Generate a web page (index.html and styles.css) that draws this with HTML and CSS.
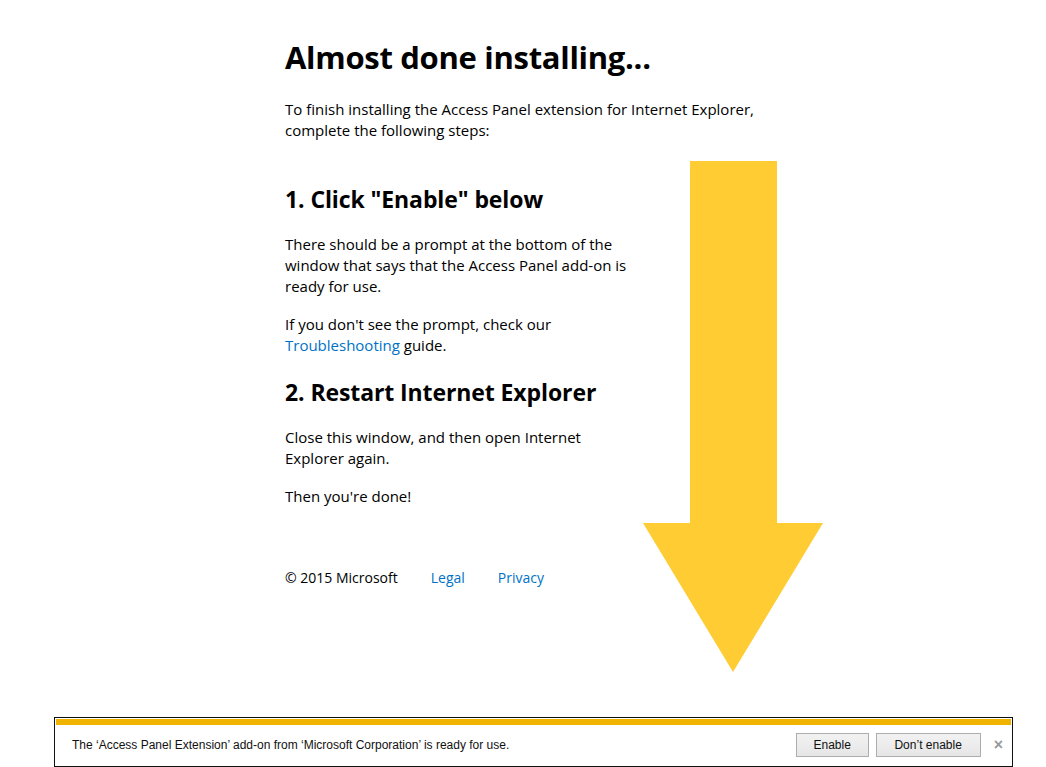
FILE: index.html
```html
<!DOCTYPE html>
<html lang="en">
<head>
<meta charset="utf-8">
<title>Almost done installing...</title>
<link rel="stylesheet" href="styles.css">
</head>
<body>
<div class="page">
  <main class="content">
    <h1 class="title">Almost done installing...</h1>
    <p class="intro">To finish installing the Access Panel extension for Internet Explorer, complete the following steps:</p>
    <div class="row">
      <div class="steps">
        <h2 class="step-title">1. Click "Enable" below</h2>
        <p class="text">There should be a prompt at the bottom of the window that says that the Access Panel add-on is ready for use.</p>
        <p class="text">If you don't see the prompt, check our <a class="link" href="#">Troubleshooting</a> guide.</p>
        <h2 class="step-title">2. Restart Internet Explorer</h2>
        <p class="text">Close this window, and then open Internet Explorer again.</p>
        <p class="text">Then you're done!</p>
        <footer class="footer">
          <span>© 2015 Microsoft</span>
          <a class="link" href="#">Legal</a>
          <a class="link" href="#">Privacy</a>
        </footer>
      </div>
      <svg class="arrow" width="180" height="511" viewBox="0 0 180 511" aria-hidden="true">
        <polygon points="47,0 134,0 134,362 180,362 90,511 0,362 47,362" fill="#ffcc33"/>
      </svg>
    </div>
  </main>
  <div class="notify">
    <div class="notify-strip"></div>
    <div class="notify-row">
      <span class="notify-text">The ‘Access Panel Extension’ add-on from ‘Microsoft Corporation’ is ready for use.</span>
      <button class="btn btn-enable" type="button">Enable</button>
      <button class="btn btn-dont" type="button">Don’t enable</button>
      <span class="notify-close">×</span>
    </div>
  </div>
</div>
</body>
</html>
```
FILE: styles.css
```css
html, body {
  margin: 0;
  padding: 0;
  background: #fff;
}
body {
  font-family: "Open Sans", "Noto Sans", sans-serif;
  color: #000;
}
.page {
  display: flex;
  flex-direction: column;
  min-height: 767px;
}
.content {
  padding-left: 285px;
}
.title {
  margin: 37px 0 0;
  font-size: 31px;
  line-height: 40px;
  font-weight: 700;
  letter-spacing: -0.3px;
}
.intro {
  margin: 22px 0 0;
  width: 490px;
  font-size: 15px;
  line-height: 21px;
}
.row {
  display: flex;
  align-items: flex-start;
  margin-top: 20px;
}
.steps {
  width: 352px;
  padding-top: 23px;
}
.step-title {
  margin: 21px 0 0;
  font-size: 23px;
  line-height: 30px;
  font-weight: 700;
  letter-spacing: -0.1px;
}
.step-title:first-child {
  margin-top: 0;
}
.text {
  margin: 17px 0 0;
  font-size: 15px;
  line-height: 21px;
}
.step-title + .text {
  margin-top: 20px;
}
.link {
  color: #0072c6;
  text-decoration: none;
}
.footer {
  display: flex;
  gap: 33px;
  margin-top: 60px;
  font-size: 14px;
  line-height: 21px;
}
.arrow {
  display: block;
  margin-left: 6px;
  flex-shrink: 0;
}
.notify {
  margin: auto 0 0 54px;
  width: 959px;
  box-sizing: border-box;
  border: 1px solid #111;
  padding: 1px;
  background: #fff;
  font-family: "Liberation Sans", "Open Sans", sans-serif;
}
.notify-strip {
  height: 6px;
  background: #f0b400;
}
.notify-row {
  display: flex;
  align-items: center;
  box-sizing: border-box;
  height: 40px;
  padding: 1px 8px 1px 16px;
}
.notify-text {
  flex: 1;
  font-size: 12px;
  color: #111;
}
.btn {
  font-family: inherit;
  font-size: 12px;
  color: #111;
  height: 24px;
  border: 1px solid #adadad;
  background: linear-gradient(#f2f2f2, #e6e6e6);
  padding: 0;
  margin-left: 7px;
}
.btn-enable {
  width: 73px;
}
.btn-dont {
  width: 105px;
}
.notify-close {
  margin-left: 13px;
  font-size: 16px;
  color: #9a9a9a;
  font-weight: 700;
}
```
